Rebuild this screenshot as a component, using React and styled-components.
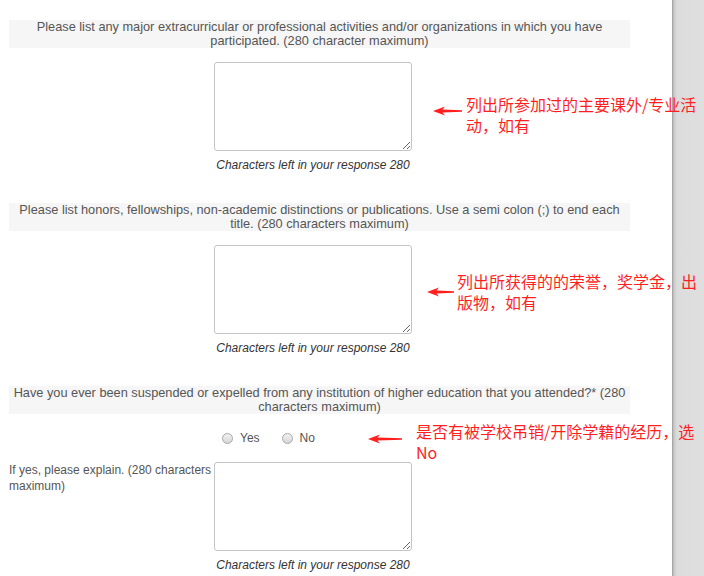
import React from 'react';
import styled, { createGlobalStyle } from 'styled-components';

const GlobalStyle = createGlobalStyle`
  html, body {
    margin: 0;
    padding: 0;
    background: #fff;
  }
  body {
    font-family: "Liberation Sans", Arial, sans-serif;
  }
`;

const questions = [
  {
    id: 'activities',
    text: 'Please list any major extracurricular or professional activities and/or organizations in which you have participated. (280 character maximum)'
  },
  {
    id: 'honors',
    text: 'Please list honors, fellowships, non-academic distinctions or publications. Use a semi colon (;) to end each title. (280 characters maximum)'
  },
  {
    id: 'suspended',
    text: 'Have you ever been suspended or expelled from any institution of higher education that you attended?* (280 characters maximum)',
    radios: ['Yes', 'No'],
    label: 'If yes, please explain. (280 characters maximum)'
  }
];

// red hand-drawn notes laid over the form
const notes = [
  { id: 1, x: 466, y: 94, lines: ['列出所参加过的主要课外/专业活', '动，如有'], arrow: { x: 433, y: 106, w: 29 } },
  { id: 2, x: 457, y: 271, lines: ['列出所获得的的荣誉，奖学金，出', '版物，如有'], arrow: { x: 427, y: 287, w: 27 } },
  { id: 3, x: 416, y: 421, lines: ['是否有被学校吊销/开除学籍的经历，选', 'No'], arrow: { x: 368, y: 434, w: 34 } }
];

const Arrow = ({ w }) => (
  <svg width={w} height='10' viewBox={`0 0 ${w} 10`}>
    <path
      d={`M0 5 L12 0.4 L9.5 3.5 L${w} 4.3 L${w} 5.7 L9.5 6.5 L12 9.6 Z`}
      fill='#ff1f1f'
    />
  </svg>
);

const Question = ({ q }) => (
  <Section>
    <Band>{q.text}</Band>
    {q.radios && (
      <RadioRow>
        <span />
        <Options>
          {q.radios.map(r => (
            <Option key={r}>
              <RadioDot />
              {r}
            </Option>
          ))}
        </Options>
      </RadioRow>
    )}
    <Body>
      <SideLabel>{q.label}</SideLabel>
      <Field>
        <TextArea />
        <CharsLeft>Characters left in your response 280</CharsLeft>
      </Field>
    </Body>
  </Section>
);

const App = () => (
  <Page>
    <GlobalStyle />
    <Main>
      {questions.map(q => (
        <Question key={q.id} q={q} />
      ))}
    </Main>
    <Gutter />
    {notes.map(n => (
      <React.Fragment key={n.id}>
        <ArrowWrap style={{ left: n.arrow.x, top: n.arrow.y }}>
          <Arrow w={n.arrow.w} />
        </ArrowWrap>
        <Note style={{ left: n.x, top: n.y }}>
          {n.lines.map(l => (
            <div key={l}>{l}</div>
          ))}
        </Note>
      </React.Fragment>
    ))}
  </Page>
);

const Page = styled.div`
  position: relative;
  display: flex;
  min-height: 100vh;
  overflow: hidden;
`;

const Main = styled.div`
  width: 672px;
  flex: none;
  background: #fff;
  padding-top: 20px;
`;

const Gutter = styled.div`
  flex: 1;
  background: linear-gradient(to right, #9c9c9c 0, #c9c9c9 2px, #dcdcdc 5px, #dfdfdf 100%);
`;

const Section = styled.section`
  margin-bottom: 31px;
`;

const Band = styled.div`
  width: 621px;
  margin-left: 9px;
  box-sizing: border-box;
  background: #f6f6f6;
  color: #555;
  font-size: 12.75px;
  line-height: 14px;
  text-align: center;
  padding: 0 2px;
`;

const Body = styled.div`
  display: grid;
  grid-template-columns: 205px 198px;
  padding-left: 9px;
  margin-top: 14px;
`;

const RadioRow = styled(Body)`
  height: 20px;
  align-items: center;
`;

const Options = styled.div`
  display: flex;
  gap: 22px;
  padding-left: 8px;
`;

const Option = styled.label`
  display: flex;
  align-items: center;
  gap: 7px;
  color: #555;
  font-size: 12px;
`;

const RadioDot = styled.span`
  width: 9px;
  height: 9px;
  border-radius: 50%;
  border: 1px solid #a8a8a8;
  background: linear-gradient(#f2f2f2, #d6d6d6);
`;

const SideLabel = styled.div`
  color: #555;
  font-size: 12px;
  line-height: 16px;
`;

const Field = styled.div`
  display: flex;
  flex-direction: column;
`;

const TextArea = styled.textarea`
  display: block;
  width: 198px;
  height: 89px;
  box-sizing: border-box;
  border: 1px solid #c4c4c4;
  border-radius: 3px;
  margin: 0;
  background: #fff;
`;

const CharsLeft = styled.div`
  margin-top: 7px;
  font-size: 12px;
  line-height: 14px;
  font-style: italic;
  color: #333;
  text-align: center;
`;

const ArrowWrap = styled.div`
  position: absolute;
  line-height: 0;
`;

const Note = styled.div`
  position: absolute;
  white-space: nowrap;
  color: #ff1f1f;
  font-family: "Noto Sans CJK SC", "Liberation Sans", sans-serif;
  font-size: 16px;
  line-height: 21px;
`;

export default App;
